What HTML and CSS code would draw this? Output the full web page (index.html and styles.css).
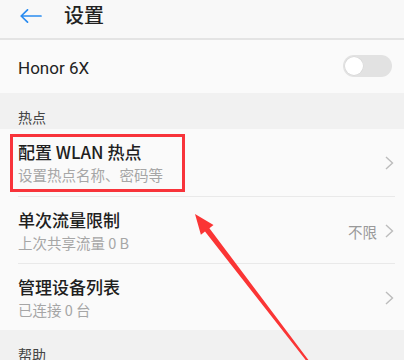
FILE: index.html
```html
<!DOCTYPE html>
<html lang="zh-CN">
<head>
<meta charset="utf-8">
<link rel="stylesheet" href="styles.css">
</head>
<body>
<div class="screen">
  <header class="topbar">
    <svg class="back" width="22" height="14" viewBox="0 0 22 14"><path d="M21 7H1.2M7.5 0.8L1.2 7l6.3 6.2" fill="none" stroke="#2a8cf0" stroke-width="1.7" stroke-linecap="round" stroke-linejoin="round"/></svg>
    <h1 class="page-title">设置</h1>
  </header>
  <div class="device-row">
    <span class="device-name">Honor 6X</span>
    <span class="switch"><span class="knob"></span></span>
  </div>
  <div class="section">热点</div>
  <ul class="list">
    <li class="item">
      <div class="texts"><div class="title">配置 WLAN 热点</div><div class="sub">设置热点名称、密码等</div></div>
      <div class="trail"><svg class="chev" width="9" height="14" viewBox="0 0 9 14"><path d="M1 1l6.5 6L1 13" fill="none" stroke="#bcbcbc" stroke-width="1.4"/></svg></div>
    </li>
    <li class="item">
      <div class="texts"><div class="title">单次流量限制</div><div class="sub">上次共享流量 0 B</div></div>
      <div class="trail"><span class="value">不限</span><svg class="chev" width="9" height="14" viewBox="0 0 9 14"><path d="M1 1l6.5 6L1 13" fill="none" stroke="#bcbcbc" stroke-width="1.4"/></svg></div>
    </li>
    <li class="item">
      <div class="texts"><div class="title">管理设备列表</div><div class="sub">已连接 0 台</div></div>
      <div class="trail"><svg class="chev" width="9" height="14" viewBox="0 0 9 14"><path d="M1 1l6.5 6L1 13" fill="none" stroke="#bcbcbc" stroke-width="1.4"/></svg></div>
    </li>
  </ul>
  <div class="section">帮助</div>

  <div class="highlight"></div>
  <svg class="annot" width="404" height="360" viewBox="0 0 404 360">
    <polygon points="195,214 213.5,225 209.4,228.3 312.7,365.7 311.1,366.9 205,231.5 200.9,234.8" fill="#fa3535"/>
  </svg>
</div>
</body>
</html>
```

FILE: styles.css
```css
* { box-sizing: border-box; }
html, body { margin: 0; padding: 0; }
body {
  width: 404px;
  height: 360px;
  overflow: hidden;
  background: #fafafa;
  font-family: "Noto Sans CJK SC", "Noto Sans", sans-serif;
  color: #1f1f1f;
}
.screen {
  position: relative;
  width: 404px;
  height: 360px;
  overflow: hidden;
}
.topbar {
  height: 40px;
  display: flex;
  align-items: center;
  padding: 0 0 9px 20px;
  background: #f8f8f8;
  border-bottom: 2px solid #e4e4e4;
}
.back { display: block; margin-top: 3px; }
.page-title {
  margin: 0 0 0 22px;
  font-size: 20px;
  font-weight: 500;
  line-height: 24px;
  color: #222;
}
.device-row {
  height: 53px;
  display: flex;
  align-items: center;
  justify-content: space-between;
  padding: 2px 12px 0 18px;
  background: #fafafa;
}
.device-name {
  font-family: Roboto, "Noto Sans CJK SC", sans-serif;
  font-size: 17px;
  color: #222;
}
.switch {
  width: 49px;
  height: 22px;
  border-radius: 11px;
  background: #e2e2e2;
  display: flex;
  align-items: center;
  padding-left: 2px;
  margin-top: -3px;
}
.knob {
  width: 18px;
  height: 18px;
  border-radius: 50%;
  background: #fff;
  box-shadow: 0 0 0 0.5px #d6d6d6;
}
.section {
  height: 36px;
  padding: 14px 0 0 18px;
  font-size: 14px;
  line-height: 20px;
  color: #444;
  background: #f1f1f1;
}
.list {
  list-style: none;
  margin: 0;
  padding: 0;
  background: #fafafa;
}
.item {
  height: 67px;
  margin: 0 9px 0 18px;
  padding: 11px 0 0 0;
  display: flex;
  justify-content: space-between;
  align-items: flex-start;
}
.item + .item { border-top: 1px solid #e9e9e9; }
.title {
  font-size: 17px;
  font-weight: 500;
  line-height: 24px;
  color: #202020;
}
.sub {
  font-size: 14.5px;
  line-height: 22px;
  color: #a6a6a6;
}
.trail {
  display: flex;
  align-items: center;
  gap: 8px;
  height: 46px;
  padding-right: 1px;
}
.value {
  font-size: 14.5px;
  color: #999;
}
.chev { display: block; }
.highlight {
  position: absolute;
  left: 10px;
  top: 134px;
  width: 175px;
  height: 58px;
  border: 3px solid #f8333a;
}
.annot {
  position: absolute;
  left: 0;
  top: 0;
}
```
